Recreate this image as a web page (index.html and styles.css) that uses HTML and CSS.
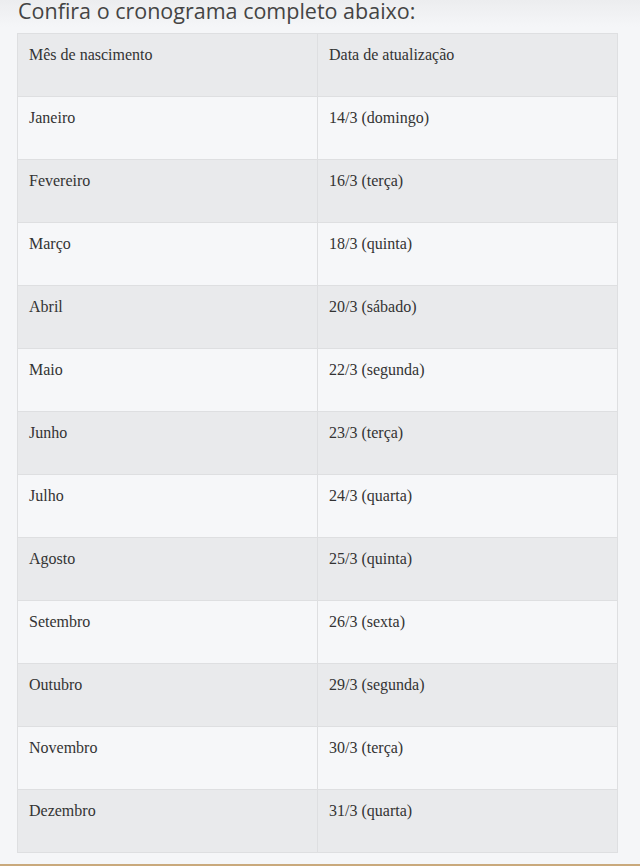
FILE: index.html
```html
<!DOCTYPE html>
<html lang="pt-BR">
<head>
<meta charset="utf-8">
<link rel="stylesheet" href="styles.css">
</head>
<body>
<div class="page">
  <h2 class="title">Confira o cronograma completo abaixo:</h2>
  <table class="schedule">
    <tr><td>Mês de nascimento</td><td>Data de atualização</td></tr>
    <tr><td>Janeiro</td><td>14/3 (domingo)</td></tr>
    <tr><td>Fevereiro</td><td>16/3 (terça)</td></tr>
    <tr><td>Março</td><td>18/3 (quinta)</td></tr>
    <tr><td>Abril</td><td>20/3 (sábado)</td></tr>
    <tr><td>Maio</td><td>22/3 (segunda)</td></tr>
    <tr><td>Junho</td><td>23/3 (terça)</td></tr>
    <tr><td>Julho</td><td>24/3 (quarta)</td></tr>
    <tr><td>Agosto</td><td>25/3 (quinta)</td></tr>
    <tr><td>Setembro</td><td>26/3 (sexta)</td></tr>
    <tr><td>Outubro</td><td>29/3 (segunda)</td></tr>
    <tr><td>Novembro</td><td>30/3 (terça)</td></tr>
    <tr><td>Dezembro</td><td>31/3 (quarta)</td></tr>
  </table>
</div>
<div class="rule"></div>
</body>
</html>
```
FILE: styles.css
```css
html, body { margin: 0; padding: 0; }
body {
  background: #f5f6f8;
  width: 640px;
  height: 866px;
  overflow: hidden;
  position: relative;
}
.page {
  background: linear-gradient(#ebecee 0px, #f5f6f8 30px);
  padding: 0 22px 0 17px;
  height: 864px;
  box-sizing: border-box;
}
.title {
  margin: -3px 0 0 0;
  padding: 0 0 0 1px;
  font-family: "Open Sans", sans-serif;
  font-weight: 400;
  font-size: 21.5px;
  line-height: 28px;
  height: 36px;
  color: #444;
  box-sizing: border-box;
}
.schedule {
  width: 601px;
  border-collapse: collapse;
  table-layout: fixed;
  border: 1px solid #dedfe1;
  font-family: "Liberation Serif", serif;
  font-size: 16px;
  color: #333;
}
.schedule td {
  height: 63px;
  box-sizing: border-box;
  padding: 12px 11px;
  vertical-align: top;
  line-height: 18px;
  border: 1px solid #dedfe1;
}
.schedule td:first-child { width: 300px; }
.schedule tr:nth-child(odd) { background: #e9eaec; }
.schedule tr:nth-child(even) { background: #f6f7f9; }
.rule {
  position: absolute;
  left: 0; right: 0; bottom: 0;
  height: 2px;
  background: #c9a97c;
}
```
